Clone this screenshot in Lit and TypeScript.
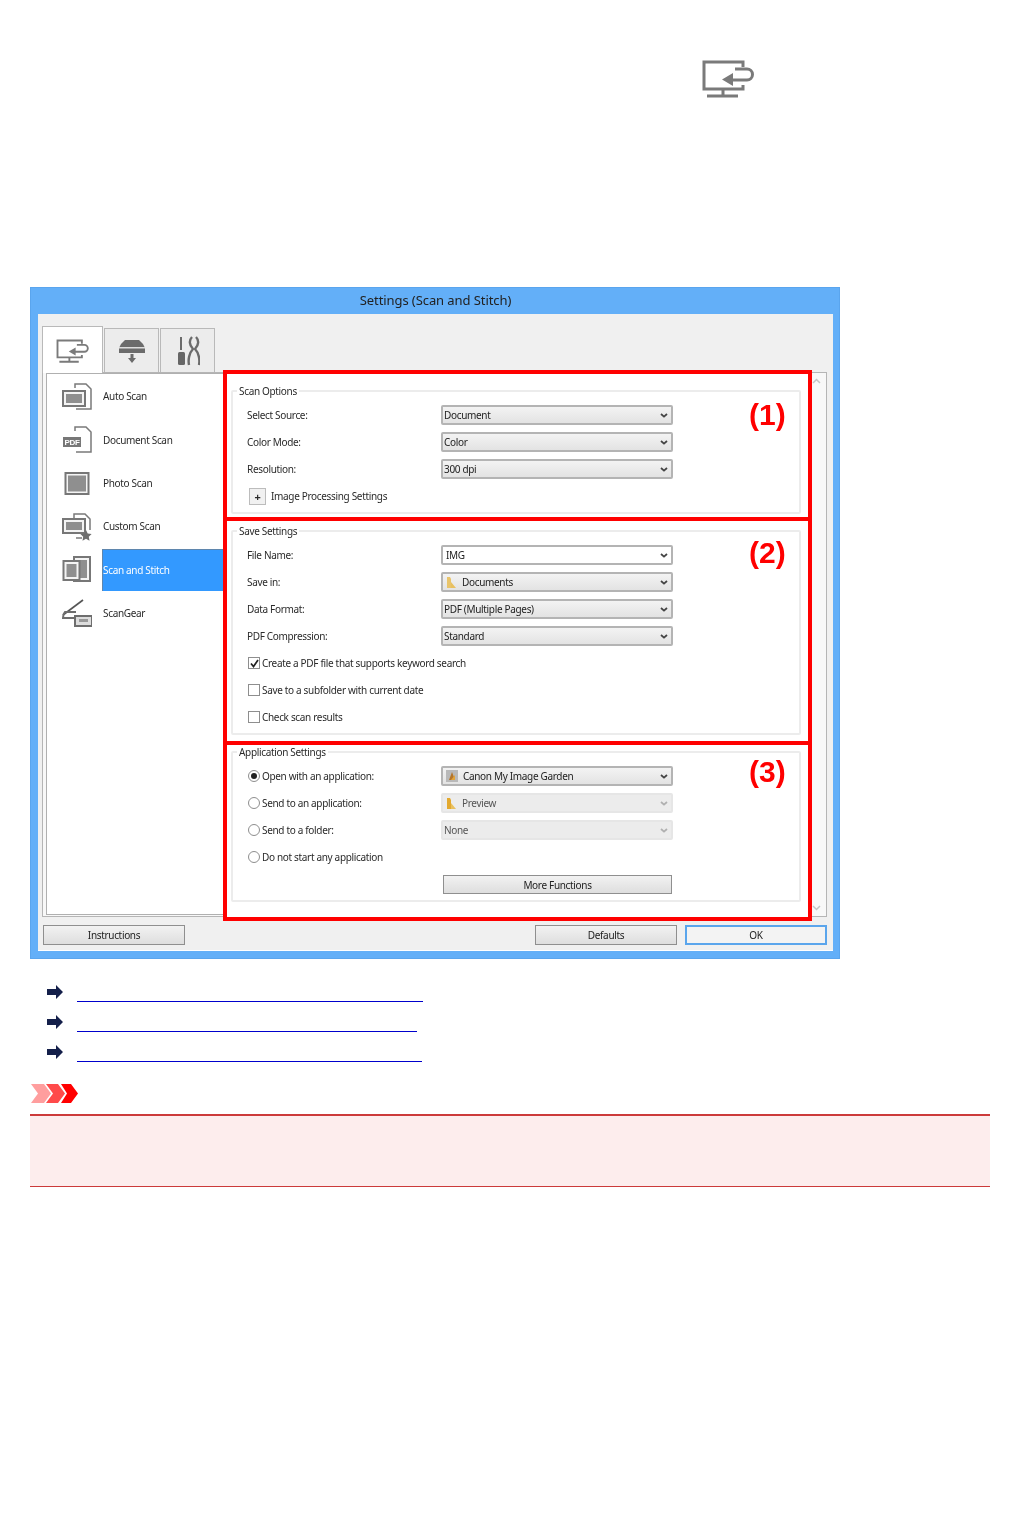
import { LitElement, html, css, svg } from "lit";
import { customElement } from "lit/decorators.js";

const G = "#7a7a7a";
const monitor = (w: number, h: number) => html`<svg class="mon" width=${w} height=${h} viewBox="0 0 52 40" fill="none" stroke=${G} stroke-width="3">
  <path d="M41 9V4H2V31H41V27"/><path d="M21 31V38M5 38H36"/>
  <path d="M33 11H45a5.5 5.5 0 0 1 0 11H30"/><path d="M20 21.5L31 15V28Z" fill=${G} stroke="none"/>
</svg>`;

const frame = (x: number, y: number, w: number, h: number) => svg`<rect x=${x} y=${y} width=${w} height=${h} fill="#f4f4f4" stroke="#777" stroke-width="2"/><rect x=${x + 3} y=${y + 3} width=${w - 6} height=${h - 6} fill="#8f8f8f"/>`;
const page = svg`<path d="M13 7V3H24L29 8V28H14" fill="none" stroke="#7a7a7a" stroke-width="1.5"/>`;

const icons: Record<string, unknown> = {
  auto: svg`${page}${frame(1, 10, 22, 15)}`,
  doc: svg`${page}<rect x="1" y="13" width="18" height="10" fill="#777"/><text x="2.5" y="21" font-size="8" font-weight="700" font-family="Liberation Sans" fill="#fff">PDF</text>`,
  photo: svg`<rect x="3.5" y="5" width="23" height="21" fill="#f4f4f4" stroke="#777" stroke-width="2"/><rect x="6" y="7.5" width="18" height="16" fill="#8f8f8f"/>`,
  custom: svg`<path d="M12 7V3H23L28 8V19M14 27H20" fill="none" stroke="#7a7a7a" stroke-width="1.5"/>${frame(1, 8, 22, 14)}<path d="M24 19l1.7 3.6 3.9.5-2.8 2.7.7 3.9-3.5-1.9-3.5 1.9.7-3.9-2.8-2.7 3.9-.5z" fill="#6e6e6e"/>`,
  stitch: svg`<rect x="12" y="3" width="16" height="24" fill="#f4f4f4" stroke="#777" stroke-width="2"/><rect x="15" y="6" width="10" height="18" fill="#8f8f8f"/><rect x="1.5" y="7" width="16" height="19" fill="#f4f4f4" stroke="#777" stroke-width="2"/><rect x="4.5" y="10" width="10" height="13" fill="#8f8f8f"/>`,
  gear: svg`<path d="M1 17L21 2" stroke="#555" stroke-width="1.6" fill="none"/><path d="M14 14H3Q1 16 1 20H12" stroke="#6e6e6e" stroke-width="2" fill="none"/><rect x="13" y="18" width="17" height="10" fill="#ddd" stroke="#6e6e6e" stroke-width="2"/><rect x="17" y="21" width="9" height="3" fill="#999"/>`,
};

const items = [
  ["auto", "Auto Scan"], ["doc", "Document Scan"], ["photo", "Photo Scan"],
  ["custom", "Custom Scan"], ["stitch", "Scan and Stitch"], ["gear", "ScanGear"],
];

const folder = (c: string) => html`<svg class="fi" width="11" height="13" viewBox="0 0 11 13">
  <path d="M1 1H4L5 3V12H1Z" fill=${c}/><path d="M5 6L10 12H5Z" fill="#e8c060"/>
</svg>`;
const garden = html`<svg class="fi" width="12" height="12" viewBox="0 0 12 12">
  <rect width="12" height="12" fill="#b9b9b9"/><path d="M3 10L6 2L9 10Z" fill="#b5762a"/><path d="M5 10L9 5V10Z" fill="#e2a43b"/>
</svg>`;

const sel = (text: string, opts: { dis?: boolean; edit?: boolean; icon?: unknown } = {}) => html`
  <div class="sel ${opts.dis ? "dis" : ""} ${opts.edit ? "edit" : ""}">
    ${opts.icon ?? ""}<span>${text}</span>
    <svg class="chev" width="8" height="5" viewBox="0 0 8 5"><path d="M1 1L4 3.6L7 1" fill="none" stroke="currentColor" stroke-width="1.8"/></svg>
  </div>`;

const links = [346, 340, 345];

@customElement("app-root")
export class AppRoot extends LitElement {
  static styles = css`
    :host { display: block; min-height: 1514px; background: #fff; font-family: "Noto Sans", sans-serif; color: #2a2a2a; }
    .page { padding: 58px 31px 0 30px; }
    .top { display: block; margin-left: 672px; filter: blur(0.5px); }
    .mon { display: block; }
    .window { margin-top: 189px; width: 810px; box-sizing: border-box; padding: 0 7px 8px 8px; background: #63aff8; box-shadow: inset 0 0 0 1px #5aa5ee; filter: blur(0.5px); font-size: 10px; letter-spacing: -0.33px; }
    .title { height: 25px; padding-bottom: 2px; display: flex; align-items: center; justify-content: center; font-size: 13px; letter-spacing: -0.08px; color: #222; }
    .client { background: #f0f0f0; padding: 12px 6px 5px 4px; border-bottom: 1px solid #fff; }
    .tabs { display: flex; align-items: flex-end; height: 46px; }
    .tab { width: 55px; height: 44px; margin-left: 1px; box-sizing: border-box; border: 1px solid #b9b9b9; border-bottom: 0; background: #ececec; display: flex; align-items: center; justify-content: center; }
    .tab.on { width: 61px; height: 47px; margin: 0 0 -1px; background: #fff; position: relative; z-index: 1; }
    .tabpage { display: flex; height: 545px; box-sizing: border-box; border: 1px solid #b5b5b5; background: #f8f8f8; padding-left: 3px; }
    .list { width: 178px; box-sizing: border-box; height: 542px; border: 1px solid #b0b0b0; border-right: 0; background: #fff; display: grid; grid-auto-rows: 43.33px; padding-top: 0.3px; align-content: start; }
    .item { display: flex; align-items: center; padding-left: 15px; gap: 10px; }
    .item svg { flex: none; }
    .item span { flex: 1; align-self: stretch; display: flex; align-items: center; padding-left: 1px; margin: 1px 0 0; }
    .item.on span { background: #3399ff; color: #fff; box-shadow: inset 1px 1px 0 #5f86ad; }
    .col { width: 589px; flex: none; margin: -3px 0 -5px; background: #fff; position: relative; }
    .sec { border: 4px solid #f00; border-bottom: 0; padding: 0 7px 3px 4px; }
    .sec.s1 { padding-top: 11px; }
    .sec.s2 { padding-top: 4px; padding-bottom: 6px; }
    .sec.s3 { padding-top: 1px; padding-bottom: 15px; border-bottom: 4px solid #f00; }
    fieldset { margin: 0; padding: 8px 0 6px 14px; border: 2px solid #ececec; border-radius: 2px; min-width: 0; }
    legend { padding: 0 2px; margin-left: -10px; height: 12px; line-height: 12px; }
    .grid { display: grid; grid-template-columns: 194px 232px 1fr; grid-auto-rows: 20px; row-gap: 7px; align-items: center; }
    .wide { grid-column: 1 / 3; display: flex; align-items: center; }
    .wide.r { grid-column: 1; }
    .num { grid-column: 3; font: 700 30px/20px "Liberation Sans", sans-serif; letter-spacing: 0; color: #f00; padding-left: 76px; white-space: nowrap; }
    .n2 { margin-top: -4px; }
    .n3 { margin-top: -8px; }
    .sel { height: 20px; box-sizing: border-box; border: 2px solid #b4b4b4; border-radius: 2px; background: linear-gradient(#f3f3f3, #e3e3e3); display: flex; align-items: center; padding-left: 1px; color: #222; }
    .sel.edit { background: #fff; padding-left: 3px; }
    .sel.dis { border-color: #e6e6e6; background: #ececec; color: #555; }
    .sel .fi { margin: 0 5px 0 2px; }
    .chev { margin-left: auto; margin-right: 3px; color: #444; }
    .dis .chev { color: #b0b0b0; }
    .box { width: 12px; height: 12px; box-sizing: border-box; border: 1px solid #8e8e8e; background: #fff; margin: 0 2px 0 1px; flex: none; display: flex; align-items: center; justify-content: center; }
    .radio { border-radius: 50%; }
    .dot { width: 6px; height: 6px; border-radius: 50%; background: #222; }
    .plus { width: 17px; height: 17px; margin: 0 5px 0 2px; box-sizing: border-box; border: 1px solid #bcbcbc; background: #f1f1f1; display: flex; align-items: center; justify-content: center; font-weight: 700; font-size: 11px; }
    .btn { box-sizing: border-box; height: 20px; border: 1px solid #8f8f8f; background: linear-gradient(#f2f2f2, #dedede); display: flex; align-items: center; justify-content: center; color: #222; }
    .more { grid-column: 2; height: 19px; margin: 1px 1px 0 2px; }
    .scroll { flex: 1; display: flex; flex-direction: column; justify-content: space-between; align-items: center; padding: 5px 5px 5px 0; color: #c4c4c4; }
    .scroll svg { display: block; }
    .buttons { display: flex; gap: 8px; margin: 8px 0 0 1px; }
    .buttons .btn { width: 142px; }
    .buttons .btn:first-child { margin-right: auto; }
    .ok { border: 2px solid #5aa5ec; background: #f3f3f3; }
    .links { margin-top: 13px; }
    .link { height: 30px; display: flex; align-items: flex-end; padding-left: 17px; gap: 14px; }
    .link svg { margin-bottom: 3px; flex: none; }
    .link a { display: block; height: 1px; background: #0000cc; }
    .imp { display: block; margin: 22px 0 11px 1px; }
    .note { height: 73px; box-sizing: border-box; border-top: 2px solid #cc3a3a; border-bottom: 1px solid #cc3a3a; background: #fdeded; }
  `;

  private label(t: string) { return html`<div>${t}</div>`; }

  render() {
    return html`<div class="page">
      <div class="top">${monitor(52, 40)}</div>
      <div class="window">
        <div class="title">Settings (Scan and Stitch)</div>
        <div class="client">
          <div class="tabs">
            <div class="tab on">${monitor(33, 25)}</div>
            <div class="tab"><svg width="28" height="24" viewBox="0 0 28 24"><path d="M7 1H21Q25 4 27 9V14H1V9Q3 4 7 1Z" fill="#6b6b6b"/><rect x="1" y="8" width="26" height="1.5" fill="#ddd"/><path d="M12.5 15H15.5V19H18L14 24L10 19H12.5Z" fill="#6b6b6b"/></svg></div>
            <div class="tab"><svg width="24" height="30" viewBox="0 0 24 30" fill="none" stroke="#6b6b6b"><path d="M5 1V14" stroke-width="2"/><rect x="2" y="16" width="7" height="13" rx="1.5" fill="#666" stroke="none"/><path d="M16 1C13 4 13 9 17 13C13 17 12 24 13 29M20 1C23 4 23 9 19 13C23 17 24 24 23 29" stroke-width="2.4"/></svg></div>
          </div>
          <div class="tabpage">
            <div class="list">
              ${items.map(([k, t]) => html`<div class="item ${k === "stitch" ? "on" : ""}"><svg width="30" height="30" viewBox="0 0 30 30">${icons[k]}</svg><span>${t}</span></div>`)}
            </div>
            <div class="col">
              <div class="sec s1"><fieldset><legend>Scan Options</legend><div class="grid">
                ${this.label("Select Source:")}${sel("Document")}<div class="num">(1)</div>
                ${this.label("Color Mode:")}${sel("Color")}<div></div>
                ${this.label("Resolution:")}${sel("300 dpi")}<div></div>
                <div class="wide"><div class="plus">+</div>Image Processing Settings</div>
              </div></fieldset></div>
              <div class="sec s2"><fieldset><legend>Save Settings</legend><div class="grid">
                ${this.label("File Name:")}${sel("IMG", { edit: true })}<div class="num n2">(2)</div>
                ${this.label("Save in:")}${sel("Documents", { icon: folder("#e9c46a") })}<div></div>
                ${this.label("Data Format:")}${sel("PDF (Multiple Pages)")}<div></div>
                ${this.label("PDF Compression:")}${sel("Standard")}<div></div>
                <div class="wide"><div class="box"><svg width="9" height="9" viewBox="0 0 9 9"><path d="M1 4.5L3.5 7.5L8 1" fill="none" stroke="#222" stroke-width="1.7"/></svg></div>Create a PDF file that supports keyword search</div>
                <div class="wide"><div class="box"></div>Save to a subfolder with current date</div>
                <div class="wide"><div class="box"></div>Check scan results</div>
              </div></fieldset></div>
              <div class="sec s3"><fieldset><legend>Application Settings</legend><div class="grid">
                <div class="wide r"><div class="box radio"><div class="dot"></div></div>Open with an application:</div>${sel("Canon My Image Garden", { icon: garden })}<div class="num n3">(3)</div>
                <div class="wide r"><div class="box radio"></div>Send to an application:</div>${sel("Preview", { dis: true, icon: folder("#e3a92f") })}<div></div>
                <div class="wide r"><div class="box radio"></div>Send to a folder:</div>${sel("None", { dis: true })}<div></div>
                <div class="wide"><div class="box radio"></div>Do not start any application</div><div></div>
                <div class="btn more">More Functions</div>
              </div></fieldset></div>
            </div>
            <div class="scroll">
              <svg width="9" height="6" viewBox="0 0 9 6"><path d="M1 5L4.5 1.5L8 5" fill="none" stroke="currentColor" stroke-width="1.5"/></svg>
              <svg width="9" height="6" viewBox="0 0 9 6"><path d="M1 1L4.5 4.5L8 1" fill="none" stroke="currentColor" stroke-width="1.5"/></svg>
            </div>
          </div>
          <div class="buttons">
            <div class="btn">Instructions</div><div class="btn">Defaults</div><div class="btn ok">OK</div>
          </div>
        </div>
      </div>
      <div class="links">
        ${links.map((w) => html`<div class="link"><svg width="16" height="14" viewBox="0 0 16 14"><path d="M0 4H9V0L16 7L9 14V10H0Z" fill="#141f4a"/></svg><a style="width:${w}px"></a></div>`)}
      </div>
      <svg class="imp" width="47" height="19" viewBox="0 0 47 19">
        <path d="M0 0H13L20 9.5L13 19H0L7 9.5Z" fill="#ff9e9e"/>
        <path d="M15 0H27L34 9.5L27 19H15L22 9.5Z" fill="#ff4a4a"/>
        <path d="M30 0H40L47 9.5L40 19H30L36 9.5Z" fill="#f00"/>
      </svg>
      <div class="note"></div>
    </div>`;
  }
}
